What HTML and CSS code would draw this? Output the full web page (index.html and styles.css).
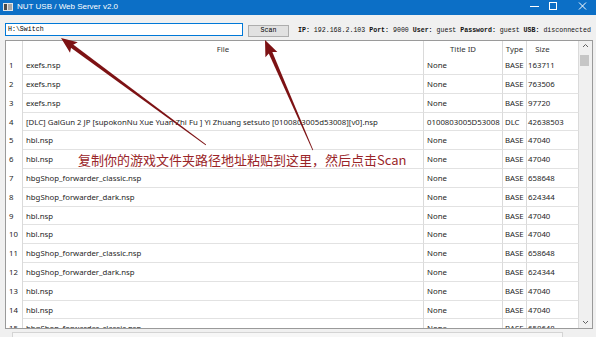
FILE: index.html
```html
<!DOCTYPE html>
<html lang="zh-CN">
<head>
<meta charset="utf-8">
<title>NUT USB / Web Server v2.0</title>
<link rel="stylesheet" href="styles.css">
</head>
<body>
<div class="window">
  <div class="titlebar">
    <svg class="appicon" width="10" height="8" viewBox="0 0 10 8">
      <rect x="0" y="0" width="10" height="8" fill="#e6e6e6"/>
      <rect x="1" y="1" width="3" height="6" fill="#4a4a4a"/>
      <rect x="5" y="1" width="4" height="6" fill="#a8a8a8"/>
    </svg>
    <span class="title">NUT USB / Web Server v2.0</span>
    <svg class="controls" width="76" height="15" viewBox="0 0 76 15">
      <line x1="10" y1="6.5" x2="19" y2="6.5" stroke="#fff" stroke-width="1"/>
      <rect x="29.5" y="2.5" width="7" height="7" fill="none" stroke="#fff" stroke-width="1"/>
      <path d="M59 2.5 L66 9.5 M66 2.5 L59 9.5" stroke="#fff" stroke-width="1"/>
    </svg>
  </div>

  <div class="toolbar">
    <div class="pathbox">H:\Switch</div>
    <div class="btn">Scan</div>
    <div class="status"><b>IP:</b> 192.168.2.103 <b>Port:</b> 9000 <b>User:</b> guest <b>Password:</b> guest <b>USB:</b> disconnected</div>
  </div>

  <div class="frame">
    <div class="table">
      <div class="row head">
        <div class="c num"></div><div class="c file">File</div><div class="c tid">Title ID</div><div class="c type">Type</div><div class="c size">Size</div>
      </div>
      <div class="row"><div class="c num">1</div><div class="c file">exefs.nsp</div><div class="c tid">None</div><div class="c type">BASE</div><div class="c size">163711</div></div>
      <div class="row"><div class="c num">2</div><div class="c file">exefs.nsp</div><div class="c tid">None</div><div class="c type">BASE</div><div class="c size">763506</div></div>
      <div class="row"><div class="c num">3</div><div class="c file">exefs.nsp</div><div class="c tid">None</div><div class="c type">BASE</div><div class="c size">97720</div></div>
      <div class="row"><div class="c num">4</div><div class="c file">[DLC] GalGun 2 JP [supokonNu Xue Yuan Zhi Fu ] Yi Zhuang setsuto [0100803005d53008][v0].nsp</div><div class="c tid">0100803005D53008</div><div class="c type">DLC</div><div class="c size">42638503</div></div>
      <div class="row"><div class="c num">5</div><div class="c file">hbl.nsp</div><div class="c tid">None</div><div class="c type">BASE</div><div class="c size">47040</div></div>
      <div class="row"><div class="c num">6</div><div class="c file">hbl.nsp</div><div class="c tid">None</div><div class="c type">BASE</div><div class="c size">47040</div></div>
      <div class="row"><div class="c num">7</div><div class="c file">hbgShop_forwarder_classic.nsp</div><div class="c tid">None</div><div class="c type">BASE</div><div class="c size">658648</div></div>
      <div class="row"><div class="c num">8</div><div class="c file">hbgShop_forwarder_dark.nsp</div><div class="c tid">None</div><div class="c type">BASE</div><div class="c size">624344</div></div>
      <div class="row"><div class="c num">9</div><div class="c file">hbl.nsp</div><div class="c tid">None</div><div class="c type">BASE</div><div class="c size">47040</div></div>
      <div class="row"><div class="c num">10</div><div class="c file">hbl.nsp</div><div class="c tid">None</div><div class="c type">BASE</div><div class="c size">47040</div></div>
      <div class="row"><div class="c num">11</div><div class="c file">hbgShop_forwarder_classic.nsp</div><div class="c tid">None</div><div class="c type">BASE</div><div class="c size">658648</div></div>
      <div class="row"><div class="c num">12</div><div class="c file">hbgShop_forwarder_dark.nsp</div><div class="c tid">None</div><div class="c type">BASE</div><div class="c size">624344</div></div>
      <div class="row"><div class="c num">13</div><div class="c file">hbl.nsp</div><div class="c tid">None</div><div class="c type">BASE</div><div class="c size">47040</div></div>
      <div class="row"><div class="c num">14</div><div class="c file">hbl.nsp</div><div class="c tid">None</div><div class="c type">BASE</div><div class="c size">47040</div></div>
      <div class="row"><div class="c num">15</div><div class="c file">hbgShop_forwarder_classic.nsp</div><div class="c tid">None</div><div class="c type">BASE</div><div class="c size">658648</div></div>
    </div>
    <div class="vscroll">
      <svg class="sarrow" width="13" height="10" viewBox="0 0 13 10"><path d="M4 6 L6.5 3.5 L9 6" fill="none" stroke="#606060" stroke-width="1"/></svg>
      <div class="thumb"></div>
      <div class="track"></div>
      <svg class="sarrow" width="13" height="10" viewBox="0 0 13 10"><path d="M4 4 L6.5 6.5 L9 4" fill="none" stroke="#606060" stroke-width="1"/></svg>
    </div>
  </div>
  <div class="hscroll"></div>

  <div class="note">复制你的游戏文件夹路径地址粘贴到这里，然后点击Scan</div>

  <svg class="arrows" width="596" height="337" viewBox="0 0 596 337">
    <g transform="translate(61 38) rotate(36.4)" fill="#7d1214">
      <path d="M0 0 L16 -6.5 L13 0 L16 6.5 Z"/>
      <path d="M12 -2 L180 -0.4 L180 0.4 L12 2 Z"/>
    </g>
    <g transform="translate(265 40) rotate(66.5)" fill="#7d1214">
      <path d="M0 0 L16 -6.5 L13 0 L16 6.5 Z"/>
      <path d="M12 -2 L120 -0.4 L120 0.4 L12 2 Z"/>
    </g>
  </svg>
</div>
</body>
</html>
```

FILE: styles.css
```css
html, body {
  margin: 0;
  padding: 0;
}

body {
  background: #f0f0f0;
  font-family: "Noto Sans", "Liberation Sans", sans-serif;
}

.window {
  position: relative;
  width: 596px;
  height: 337px;
  overflow: hidden;
  background: #f0f0f0;
}

/* Title bar */
.titlebar {
  display: flex;
  align-items: flex-start;
  height: 15px;
  background: #0c6fc6;
  color: #fff;
}

.appicon {
  margin: 3px 0 0 3px;
  flex: none;
}

.title {
  margin-left: 4px;
  font-family: "Liberation Sans", "Noto Sans", sans-serif;
  font-size: 8px;
  line-height: 13px;
  white-space: nowrap;
}

.controls {
  margin-left: auto;
  flex: none;
}

/* Toolbar */
.toolbar {
  display: flex;
  align-items: flex-start;
  padding: 8px 0 0 5px;
  height: 13px;
}

.pathbox {
  box-sizing: border-box;
  width: 238px;
  height: 13px;
  border: 1px solid #0078d7;
  background: #fff;
  font-family: "Liberation Mono", monospace;
  font-size: 6.6px;
  line-height: 11px;
  padding-left: 2px;
  color: #000;
}

.btn {
  box-sizing: border-box;
  width: 41px;
  height: 12px;
  margin: 2px 0 0 5px;
  border: 1px solid #adadad;
  background: #e1e1e1;
  font-family: "Liberation Mono", monospace;
  font-size: 6.6px;
  line-height: 10px;
  text-align: center;
  color: #000;
}

.status {
  margin: 3px 0 0 9px;
  font-family: "Liberation Mono", monospace;
  font-size: 6.6px;
  line-height: 10px;
  white-space: nowrap;
  color: #111;
}

.status b {
  font-weight: 700;
}

/* Table frame */
.frame {
  display: flex;
  box-sizing: border-box;
  width: 588px;
  height: 289px;
  margin: 4px 0 0 5px;
  border: 1px solid #9a9a9a;
  background: #fff;
}

.table {
  flex: none;
  width: 573px;
  overflow: hidden;
  font-size: 7.8px;
  color: #262626;
}

.row {
  display: grid;
  grid-template-columns: 17px 401px 79px 24px 52px;
  height: 18.8px;
}

.row.head {
  height: 15.2px;
}

.c {
  box-sizing: border-box;
  border-right: 1px solid #dadada;
  border-bottom: 1px solid #e2e2e2;
  white-space: nowrap;
  overflow: hidden;
  line-height: 19px;
  padding-left: 3px;
}

.c.num {
  border-bottom: none;
  padding-left: 3px;
}

.c.type {
  padding-left: 2px;
}

.c.size {
  padding-left: 1px;
}

.row.head .c {
  border-bottom: none;
  line-height: 17px;
  text-align: center;
  padding-left: 0;
  color: #333;
}

.row.head .c.size {
  padding-right: 20px;
}

/* Scrollbars */
.vscroll {
  flex: none;
  width: 13px;
  display: flex;
  flex-direction: column;
  background: #f0f0f0;
}

.sarrow {
  display: block;
  flex: none;
}

.thumb {
  flex: none;
  width: 9px;
  height: 11px;
  margin: 4px 0 0 1px;
  background: #c6c6c6;
}

.track {
  flex: 1;
}

.vscroll .sarrow:last-child {
  margin-bottom: 1px;
}

.hscroll {
  box-sizing: border-box;
  width: 551px;
  height: 8px;
  margin: 3px 0 0 12px;
  border: 1px solid #d4d4d4;
  background: #f7f7f7;
}

/* Annotation overlay */
.note {
  position: absolute;
  left: 78px;
  top: 151px;
  font-family: "Noto Sans CJK SC", "Noto Sans", sans-serif;
  font-size: 13px;
  line-height: 18px;
  color: #9a2528;
  white-space: nowrap;
}

.arrows {
  position: absolute;
  left: 0;
  top: 0;
  pointer-events: none;
}
```
